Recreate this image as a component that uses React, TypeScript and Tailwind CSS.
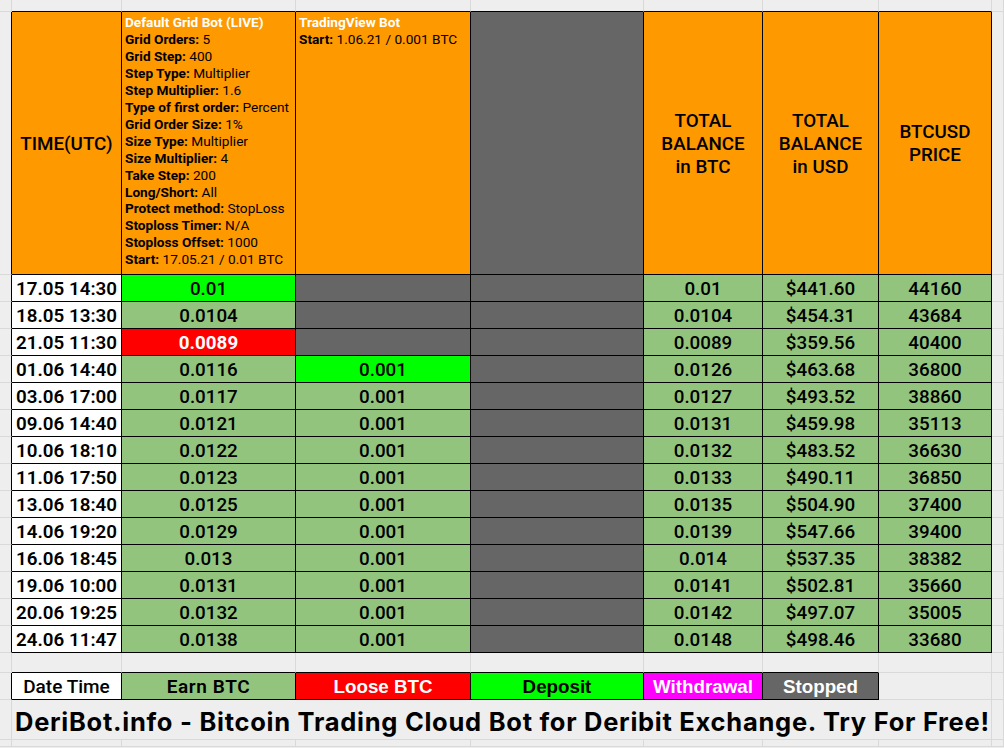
import React from 'react';

const rows = [
  ['17.05 14:30', '0.01', '', '0.01', '$441.60', '44160'],
  ['18.05 13:30', '0.0104', '', '0.0104', '$454.31', '43684'],
  ['21.05 11:30', '0.0089', '', '0.0089', '$359.56', '40400'],
  ['01.06 14:40', '0.0116', '0.001', '0.0126', '$463.68', '36800'],
  ['03.06 17:00', '0.0117', '0.001', '0.0127', '$493.52', '38860'],
  ['09.06 14:40', '0.0121', '0.001', '0.0131', '$459.98', '35113'],
  ['10.06 18:10', '0.0122', '0.001', '0.0132', '$483.52', '36630'],
  ['11.06 17:50', '0.0123', '0.001', '0.0133', '$490.11', '36850'],
  ['13.06 18:40', '0.0125', '0.001', '0.0135', '$504.90', '37400'],
  ['14.06 19:20', '0.0129', '0.001', '0.0139', '$547.66', '39400'],
  ['16.06 18:45', '0.013', '0.001', '0.014', '$537.35', '38382'],
  ['19.06 10:00', '0.0131', '0.001', '0.0141', '$502.81', '35660'],
  ['20.06 19:25', '0.0132', '0.001', '0.0142', '$497.07', '35005'],
  ['24.06 11:47', '0.0138', '0.001', '0.0148', '$498.46', '33680'],
];

const gridSettings = [
  ['Grid Orders:', '5'],
  ['Grid Step:', '400'],
  ['Step Type:', 'Multiplier'],
  ['Step Multiplier:', '1.6'],
  ['Type of first order:', 'Percent'],
  ['Grid Order Size:', '1%'],
  ['Size Type:', 'Multiplier'],
  ['Size Multiplier:', '4'],
  ['Take Step:', '200'],
  ['Long/Short:', 'All'],
  ['Protect method:', 'StopLoss'],
  ['Stoploss Timer:', 'N/A'],
  ['Stoploss Offset:', '1000'],
  ['Start:', '17.05.21 / 0.01 BTC'],
];

const blank = 'border-r border-b border-r-[#d9d9d9] border-b-[#d9d9d9]';
const blackRight = 'border-r border-b border-r-black border-b-[#d9d9d9]';
const blackBottom = 'border-r border-b border-r-[#d9d9d9] border-b-black';
const dataCell = 'flex items-center justify-center border-r border-b border-black pt-[2px] text-[18.8px]';
const headCell = 'flex items-center justify-center border-r border-b border-black bg-[#ff9900] pt-[2px] text-center text-[18.8px] font-medium leading-[23px]';
const legendCell = 'flex items-center justify-center border-r border-b border-black pt-[2px]';
const arialBold = "font-['Liberation_Sans',sans-serif] text-[18.75px] font-bold";
const botText = 'border-r border-b border-black bg-[#ff9900] pt-[2px] pl-[3px] text-[13.65px] leading-[16.95px] whitespace-nowrap';

function botCell(i: number) {
  if (i === 0) return 'bg-[#00ff00] font-medium';
  if (i === 2) return 'bg-[#ff0000] font-bold text-white';
  return 'bg-[#93c47d] font-medium';
}

export default function App() {
  return (
    <div className="grid h-[748px] w-[1004px] grid-cols-[12px_110px_174px_175px_173px_119px_116px_113px_12px] grid-rows-[12px_263px_repeat(14,27px)_20px_27px_40px_7px_2px] overflow-hidden bg-[#eeeeee] font-['Roboto',sans-serif] text-black">
      {/* Top sheet row */}
      <div className={blank} />
      <div className={blackBottom} />
      <div className={blackBottom} />
      <div className={blackBottom} />
      <div className={blackBottom} />
      <div className={blackBottom} />
      <div className={blackBottom} />
      <div className={blackBottom} />
      <div className={blank} />

      {/* Header */}
      <div className={blackRight} />
      <div className={headCell}>TIME(UTC)</div>
      <div className={botText}>
        <div className="font-bold text-white">Default Grid Bot (LIVE)</div>
        {gridSettings.map(([label, value]) => (
          <div key={label}>
            <span className="font-bold">{label}</span> {value}
          </div>
        ))}
      </div>
      <div className={botText}>
        <div className="font-bold text-white">TradingView Bot</div>
        <div>
          <span className="font-bold">Start:</span> 1.06.21 / 0.001 BTC
        </div>
      </div>
      <div className="border-r border-b border-black bg-[#666666]" />
      <div className={headCell}>
        TOTAL
        <br />
        BALANCE
        <br />
        in BTC
      </div>
      <div className={headCell}>
        TOTAL
        <br />
        BALANCE
        <br />
        in USD
      </div>
      <div className={headCell}>
        BTCUSD
        <br />
        PRICE
      </div>
      <div className={blank} />

      {/* Data rows */}
      {rows.map((row, i) => (
        <React.Fragment key={row[0]}>
          <div className={blackRight} />
          <div className={`${dataCell} bg-white font-semibold`}>{row[0]}</div>
          <div className={`${dataCell} ${botCell(i)}`}>{row[1]}</div>
          {row[2] === '' ? (
            <div className={`${dataCell} bg-[#666666]`} />
          ) : (
            <div className={`${dataCell} font-medium ${i === 3 ? 'bg-[#00ff00]' : 'bg-[#93c47d]'}`}>{row[2]}</div>
          )}
          <div className={`${dataCell} bg-[#666666]`} />
          <div className={`${dataCell} bg-[#93c47d] font-medium`}>{row[3]}</div>
          <div className={`${dataCell} bg-[#93c47d] font-medium`}>{row[4]}</div>
          <div className={`${dataCell} bg-[#93c47d] font-medium`}>{row[5]}</div>
          <div className={blank} />
        </React.Fragment>
      ))}

      {/* Spacer above legend */}
      <div className={blank} />
      <div className={blackBottom} />
      <div className={blackBottom} />
      <div className={blackBottom} />
      <div className={blackBottom} />
      <div className={blackBottom} />
      <div className={blackBottom} />
      <div className={blank} />
      <div className={blank} />

      {/* Legend */}
      <div className={blackRight} />
      <div className={`${legendCell} bg-white text-[19px] font-medium`}>Date Time</div>
      <div className={`${legendCell} bg-[#93c47d] text-[19px] font-semibold tracking-[0.6px]`}>Earn BTC</div>
      <div className={`${legendCell} bg-[#ff0000] text-white ${arialBold}`}>Loose BTC</div>
      <div className={`${legendCell} bg-[#00ff00] ${arialBold}`}>Deposit</div>
      <div className={`${legendCell} bg-[#ff00ff] text-white ${arialBold}`}>Withdrawal</div>
      <div className={`${legendCell} bg-[#666666] text-white ${arialBold}`}>Stopped</div>
      <div className={blank} />
      <div className={blank} />

      {/* Promo line */}
      <div className={blank} />
      <div className={`${blank} col-span-7 flex items-center pt-[6px] pl-[3px] font-['Inter',sans-serif] text-[25.5px] font-bold tracking-[0.73px] whitespace-nowrap`}>
        DeriBot.info - Bitcoin Trading Cloud Bot for Deribit Exchange. Try For Free!
      </div>
      <div className={blank} />

      {/* Clipped last row */}
      <div className={blank} />
      <div className={blank} />
      <div className={blank} />
      <div className={blank} />
      <div className={blank} />
      <div className={blank} />
      <div className={blank} />
      <div className={blank} />
      <div className={blank} />
    </div>
  );
}
